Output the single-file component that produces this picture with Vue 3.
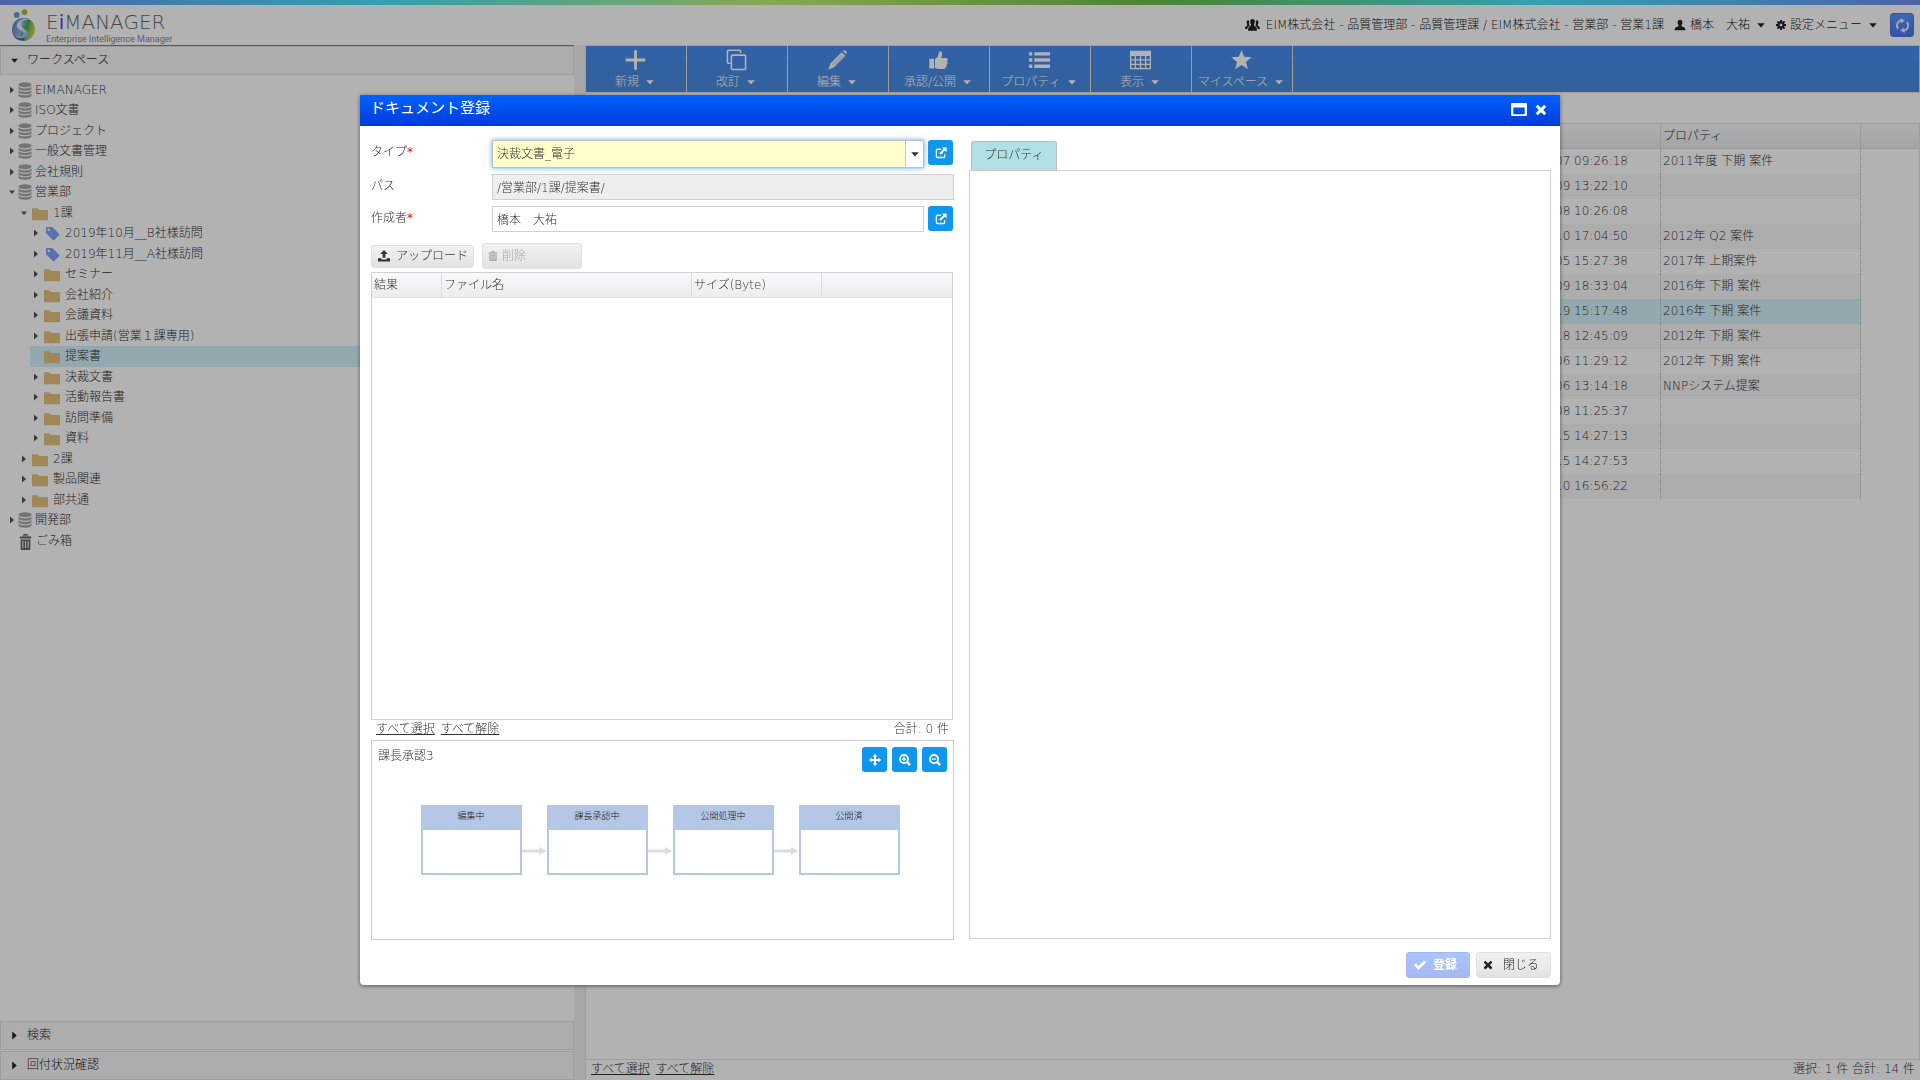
<script setup>
import { ref } from 'vue'

// Inner markup of each icon, all on a 16 x 16 grid
const icons = {
  caretDown: '<path d="M2 5h12l-6 7z"/>',
  caretRight: '<path d="M4 1v14l8-7z"/>',
  database: '<ellipse cx="8" cy="2.8" rx="7.4" ry="2.5"/><path d="M.6 4.6c1.5 2.500 13.300 2.500 14.800 0v2c0 3-14.800 3-14.800 0z"/><path d="M.6 8c1.5 2.500 13.300 2.500 14.800 0v2c0 3-14.800 3-14.800 0z"/><path d="M.6 11.400c1.5 2.500 13.300 2.500 14.800 0v2c0 3-14.800 3-14.800 0z"/>',
  folder: '<path d="M0 1.500h5.500l1.500 2h9v11.500h-16z"/>',
  tag: '<path fill-rule="evenodd" d="M1 2.200q0-1.200 1.200-1.200h4.600q.9 0 1.600.7l6.600 6.600q.8.800 0 1.600l-5 5q-.8.800-1.600 0l-6.700-6.600q-.7-.7-.7-1.600zM4 2.700a1.300 1.300 0 1 0 0 2.600a1.300 1.300 0 1 0 0-2.600z"/>',
  trash: '<path fill-rule="evenodd" d="M1 2.500h4.200v-1.500q0-1 1-1h3.600q1 0 1 1v1.500h4.200v2h-14zM6.600 1.400v1.100h2.800v-1.100zM2 5.500h12v9q0 1.500-1.500 1.500h-9q-1.500 0-1.500-1.500zM4.200 7v7h1.200v-7zM7.400 7v7h1.200v-7zM10.600 7v7h1.200v-7z"/>',
  plus: '<path d="M6.900.5h2.200v6.400h6.400v2.200h-6.400v6.400h-2.200v-6.400h-6.400v-2.200h6.400z"/>',
  copy: '<path fill="none" stroke="currentColor" stroke-width="1.200" d="M3.300 10.500h-1.200q-1 0-1-1v-7.900q0-1 1-1h8q1 0 1 1v1M5 4.300h9q.9 0 .9.900v9.200q0 .9-.9.900h-9q-.9 0-.9-.9v-9.200q0-.9.900-.9z"/>',
  pencil: '<path d="M11.200 2l2.800 2.800-8.400 8.500-4.600 2.200 1.800-5zM12 1.200q1.200-1.200 2.400 0t.4 2.700z"/><path d="M4 11.500l7.500-7.600M5 12.500l7.500-7.600" stroke="#4a8ce6" stroke-width=".4"/>',
  thumb: '<path d="M1 7h3.600v7.500h-3.600zM5.300 7.300c2-1 2.800-3 2.900-4.500 0-2.300 2.600-2 2.600.8 0 1.200-.5 2-.8 2.800h3.600c1.600 0 2 1.900.9 2.500.8.600.6 1.900-.3 2.300.4.800.1 1.800-.7 2 .2.900-.3 1.700-1.400 1.700h-3c-1.500 0-2.500-.8-3.800-.9z"/>',
  list: '<path d="M0 2h2.500v2.600h-2.500zM0 6.700h2.500v2.600h-2.500zM0 11.400h2.500v2.600h-2.500zM4 2h12v2.600h-12zM4 6.700h12v2.600h-12zM4 11.400h12v2.600h-12z"/>',
  table: '<path fill-rule="evenodd" d="M0 1h16v14h-16zM1 5v2.400h2.600v-2.400zM4.600 5v2.400h2.900v-2.400zM8.500 5v2.400h2.900v-2.400zM12.400 5v2.400h2.600v-2.400zM1 8.400v2.400h2.600v-2.400zM4.600 8.400v2.400h2.900v-2.400zM8.500 8.400v2.400h2.900v-2.400zM12.400 8.400v2.400h2.600v-2.400zM1 11.800v2.200h2.600v-2.200zM4.600 11.800v2.200h2.900v-2.200zM8.500 11.800v2.200h2.900v-2.200zM12.400 11.800v2.200h2.600v-2.200z"/>',
  star: '<path d="M8 .3l2.100 5.300 5.700.3-4.400 3.600 1.500 5.500-4.900-3.100-4.900 3.100 1.500-5.500-4.400-3.600 5.700-.3z"/>',
  users: '<path d="M8 1c1.700 0 2.600 1.300 2.500 3-.1 1.800-.8 2.500-1 3.300-.1 1 .6 1.400 1.700 1.900 1.200.5 1.500 1.500 1.500 4.300h-9.400c0-2.800.3-3.800 1.500-4.300 1.100-.5 1.800-.9 1.700-1.900-.2-.8-.9-1.500-1-3.300-.1-1.700.8-3 2.500-3z"/><path d="M3.600 2.500c-1.300 0-2 1-1.900 2.300.1 1.400.6 2 .7 2.600.1 1.300-2.400 1-2.400 4.400h2.400c.2-1.600.9-2.700 2.700-3.400-.9-1.400-1-3.700-.5-5.600zM12.400 2.500c1.300 0 2 1 1.900 2.300-.1 1.400-.6 2-.7 2.600-.1 1.300 2.400 1 2.400 4.400h-2.400c-.2-1.600-.9-2.700-2.700-3.400.9-1.400 1-3.700.5-5.600z"/>',
  user: '<path d="M8 1c2.300 0 3.300 1.700 3.200 3.800-.1 2-1.100 3-1.300 3.900-.1 1.500 1.500 1.500 3.200 2.300 1.700.7 2.100 1.600 2.100 4h-14.400c0-2.400.4-3.300 2.100-4 1.700-.8 3.300-.8 3.200-2.300-.2-.9-1.200-1.900-1.300-3.900-.1-2.100.9-3.800 3.200-3.800z"/>',
  cog: '<circle cx="8" cy="8" r="4" fill="none" stroke="currentColor" stroke-width="3.400"/><path stroke="currentColor" stroke-width="3" d="M8 0v3.500M8 12.500v3.500M0 8h3.500M12.500 8h3.500M2.300 2.300l2.500 2.500M11.200 11.200l2.500 2.500M2.300 13.700l2.500-2.500M11.200 4.800l2.500-2.500"/>',
  refresh: '<path fill="none" stroke="currentColor" stroke-width="2" d="M7 2.200a5.800 5.800 0 0 0-3.600 9.400M9 13.800a5.800 5.800 0 0 0 3.600-9.400"/><path d="M5.600 0l5 2.600-4.400 3.200zM10.400 16l-5-2.600 4.400-3.200z"/>',
  window: '<path fill-rule="evenodd" d="M1.200 0h13.600q1.200 0 1.200 1.200v13.600q0 1.200-1.200 1.200h-13.600q-1.200 0-1.200-1.200v-13.600q0-1.200 1.200-1.200zM2.300 5.500v8.200h11.400v-8.200z"/>',
  times: '<path d="M1 3.700l2.700-2.700 4.300 4 4.300-4 2.700 2.700-4 4.300 4 4.300-2.700 2.700-4.300-4-4.300 4-2.700-2.700 4-4.300z"/>',
  external: '<path fill="none" stroke="currentColor" stroke-width="1.800" d="M8 3h-4.600q-1.500 0-1.500 1.500v8q0 1.500 1.500 1.500h8q1.500 0 1.500-1.500v-3"/><path d="M9 .5h6.500v6.500l-2.200-2.200-5.500 5.500-2.100-2.100 5.500-5.500z"/>',
  upload: '<path d="M8 0l5 5.300h-3.200v5h-3.600v-5h-3.200zM0 11h4.500v1.500h7v-1.500h4.500v4.300h-16z"/>',
  move: '<path d="M8 0l3.200 3.400h-1.900v3.300h3.300v-1.900l3.400 3.200-3.400 3.200v-1.900h-3.300v3.300h1.900l-3.200 3.400-3.200-3.400h1.900v-3.300h-3.300v1.900l-3.400-3.200 3.400-3.200v1.900h3.300v-3.300h-1.900z"/>',
  zoomIn: '<circle cx="6.700" cy="6.700" r="5.400" fill="none" stroke="currentColor" stroke-width="2.400"/><path d="M9.700 12l2.300-2.300 4 4-2.300 2.300zM5.900 3.800h1.600v2.100h2.100v1.600h-2.100v2.100h-1.600v-2.100h-2.100v-1.600h2.100z"/>',
  zoomOut: '<circle cx="6.700" cy="6.700" r="5.400" fill="none" stroke="currentColor" stroke-width="2.400"/><path d="M9.700 12l2.300-2.300 4 4-2.300 2.300zM3.800 5.900h5.800v1.600h-5.800z"/>',
  check: '<path d="M0 8.300l2.600-2.600 3.500 3.500 7.200-7.200 2.700 2.600-9.900 9.900z"/>',
}

const tree = [
  { name: 'EIMANAGER', level: 0, icon: 'database' },
  { name: 'ISO文書', level: 0, icon: 'database' },
  { name: 'プロジェクト', level: 0, icon: 'database' },
  { name: '一般文書管理', level: 0, icon: 'database' },
  { name: '会社規則', level: 0, icon: 'database' },
  { name: '営業部', level: 0, icon: 'database', open: true },
  { name: '1課', level: 1, icon: 'folder', open: true },
  { name: '2019年10月__B社様訪問', level: 2, icon: 'tag' },
  { name: '2019年11月__A社様訪問', level: 2, icon: 'tag' },
  { name: 'セミナー', level: 2, icon: 'folder' },
  { name: '会社紹介', level: 2, icon: 'folder' },
  { name: '会議資料', level: 2, icon: 'folder' },
  { name: '出張申請(営業１課専用)', level: 2, icon: 'folder' },
  { name: '提案書', level: 2, icon: 'folder', leaf: true, selected: true },
  { name: '決裁文書', level: 2, icon: 'folder' },
  { name: '活動報告書', level: 2, icon: 'folder' },
  { name: '訪問準備', level: 2, icon: 'folder' },
  { name: '資料', level: 2, icon: 'folder' },
  { name: '2課', level: 1, icon: 'folder' },
  { name: '製品関連', level: 1, icon: 'folder' },
  { name: '部共通', level: 1, icon: 'folder' },
  { name: '開発部', level: 0, icon: 'database' },
  { name: 'ごみ箱', level: 0, icon: 'trash', leaf: true },
]

const tools = [
  { label: '新規', icon: 'plus' },
  { label: '改訂', icon: 'copy' },
  { label: '編集', icon: 'pencil' },
  { label: '承認/公開', icon: 'thumb' },
  { label: 'プロパティ', icon: 'list' },
  { label: '表示', icon: 'table' },
  { label: 'マイスペース', icon: 'star' },
]

const rows = [
  ['07 09:26:18', '2011年度 下期 案件'],
  ['09 13:22:10', ''],
  ['08 10:26:08', ''],
  ['10 17:04:50', '2012年 Q2 案件'],
  ['05 15:27:38', '2017年 上期案件'],
  ['09 18:33:04', '2016年 下期 案件'],
  ['19 15:17:48', '2016年 下期 案件'],
  ['18 12:45:09', '2012年 下期 案件'],
  ['06 11:29:12', '2012年 下期 案件'],
  ['06 13:14:18', 'NNPシステム提案'],
  ['08 11:25:37', ''],
  ['15 14:27:13', ''],
  ['15 14:27:53', ''],
  ['10 16:56:22', ''],
]
const selectedRow = 6

const steps = ['編集中', '課長承認中', '公開処理中', '公開済']

const docType = ref('決裁文書_電子')
const path = ref('/営業部/1課/提案書/')
const author = ref('橋本　大祐')
</script>

<template>
  <div class="app">
    <div class="rainbow"></div>
    <header class="top">
      <a class="brand" href="#">
        <svg class="mark" viewBox="0 0 26 34">
          <defs>
            <linearGradient id="orb" x1="0" y1=".3" x2="1" y2=".6">
              <stop offset="0" stop-color="#4f86c8" />
              <stop offset=".4" stop-color="#8fb4dc" />
              <stop offset=".6" stop-color="#4fa05a" />
              <stop offset="1" stop-color="#cfe650" />
            </linearGradient>
            <linearGradient id="swirl" x1="0" y1="0" x2=".6" y2="1">
              <stop offset="0" stop-color="#8fc08a" />
              <stop offset=".4" stop-color="#f4faff" />
              <stop offset="1" stop-color="#8fa8dc" />
            </linearGradient>
          </defs>
          <circle cx="13" cy="21" r="12" fill="url(#orb)" />
          <path d="M20 11c-7-1-11 3-9 7 2 3 8 4 7 9 0 3-4 5-9 5-3-1-5-3-6-5 3 2 9 2 10-1 1-4-7-4-7-9 0-5 7-9 14-6z" fill="url(#swirl)" />
          <path d="M2 25c3 6 9 7 13 4-1 4-6 4-9 2-2-1-4-4-4-6z" fill="#3d5fa8" />
          <circle cx="6" cy="6" r="3" fill="#6a9cc8" />
          <circle cx="14" cy="3" r="3" fill="#9cc03c" />
        </svg>
        <span class="brand-text">
          <span class="brand-name">E<b>i</b>MANAGER</span>
          <span class="brand-sub"><i>E</i>nterprise <i>I</i>ntelligence <i>M</i>anager</span>
        </span>
      </a>
      <div class="account">
        <svg class="ic i15" viewBox="0 0 16 16" v-html="icons.users"></svg>
        <span class="org">EIM株式会社 - 品質管理部 - 品質管理課 / EIM株式会社 - 営業部 - 営業1課</span>
        <button class="link-btn user-btn">
          <svg class="ic i12" viewBox="0 0 16 16" v-html="icons.user"></svg>
          <span>橋本　大祐</span>
          <svg class="ic caret" viewBox="0 0 16 16" v-html="icons.caretDown"></svg>
        </button>
        <button class="link-btn set-btn">
          <svg class="ic i10" viewBox="0 0 16 16" v-html="icons.cog"></svg>
          <span>設定メニュー</span>
          <svg class="ic caret" viewBox="0 0 16 16" v-html="icons.caretDown"></svg>
        </button>
        <button class="refresh" aria-label="更新">
          <svg class="ic i15" viewBox="0 0 16 16" v-html="icons.refresh"></svg>
        </button>
      </div>
    </header>

    <div class="work">
      <aside class="side">
        <button class="fold first">
          <svg class="ic fold-arrow" viewBox="0 0 16 16" v-html="icons.caretDown"></svg>ワークスペース
        </button>
        <ul class="tree">
          <li
            v-for="node in tree"
            :key="node.name"
            :class="['level' + node.level, { selected: node.selected }]"
          >
            <div class="node">
              <svg
                class="ic twisty"
                viewBox="0 0 16 16"
                v-html="node.leaf ? '' : node.open ? icons.caretDown : icons.caretRight"
              ></svg>
              <svg
                :class="['ic', 'node-icon', node.icon]"
                viewBox="0 0 16 16"
                preserveAspectRatio="none"
                v-html="icons[node.icon]"
              ></svg>
              <span>{{ node.name }}</span>
            </div>
          </li>
        </ul>
        <button class="fold">
          <svg class="ic fold-arrow" viewBox="0 0 16 16" v-html="icons.caretRight"></svg>検索
        </button>
        <button class="fold">
          <svg class="ic fold-arrow" viewBox="0 0 16 16" v-html="icons.caretRight"></svg>回付状況確認
        </button>
      </aside>

      <main class="main">
        <nav class="tools">
          <button v-for="tool in tools" :key="tool.label" class="tool">
            <svg class="ic tool-icon" viewBox="0 0 16 16" v-html="icons[tool.icon]"></svg>
            <span class="tool-label">
              {{ tool.label }}
              <svg class="ic caret" viewBox="0 0 16 16" v-html="icons.caretDown"></svg>
            </span>
          </button>
        </nav>
        <div class="list">
          <table class="docs">
            <colgroup>
              <col />
              <col class="c-prop" />
              <col class="c-rest" />
            </colgroup>
            <thead>
              <tr><th></th><th>プロパティ</th><th></th></tr>
            </thead>
            <tbody>
              <tr v-for="(row, i) in rows" :key="i" :class="{ selected: i === selectedRow }">
                <td class="date">{{ row[0] }}</td>
                <td>{{ row[1] }}</td>
                <td class="rest"></td>
              </tr>
            </tbody>
          </table>
        </div>
        <div class="list-foot">
          <span class="links"><a href="#">すべて選択</a><a href="#">すべて解除</a></span>
          <span>選択: 1 件 合計: 14 件</span>
        </div>
      </main>
    </div>

    <div class="mask">
      <section class="dialog" role="dialog" aria-labelledby="dialog-title">
        <div class="dialog-bar">
          <h1 id="dialog-title">ドキュメント登録</h1>
          <button class="bar-btn" aria-label="最大化">
            <svg class="ic max" viewBox="0 0 16 16" preserveAspectRatio="none" v-html="icons.window"></svg>
          </button>
          <button class="bar-btn" aria-label="閉じる">
            <svg class="ic i12" viewBox="0 0 16 16" v-html="icons.times"></svg>
          </button>
        </div>

        <div class="dialog-body">
          <div class="left">
            <form class="fields" @submit.prevent>
              <div class="field">
                <label for="type">タイプ<em>*</em></label>
                <span class="combo">
                  <select id="type" v-model="docType">
                    <option>決裁文書_電子</option>
                  </select>
                  <svg class="ic caret combo-arrow" viewBox="0 0 16 16" v-html="icons.caretDown"></svg>
                </span>
                <button type="button" class="square" aria-label="タイプ選択">
                  <svg class="ic i12" viewBox="0 0 16 16" v-html="icons.external"></svg>
                </button>
              </div>
              <div class="field">
                <label for="path">パス</label>
                <input id="path" v-model="path" readonly />
              </div>
              <div class="field">
                <label for="author">作成者<em>*</em></label>
                <input id="author" v-model="author" />
                <button type="button" class="square" aria-label="作成者選択">
                  <svg class="ic i12" viewBox="0 0 16 16" v-html="icons.external"></svg>
                </button>
              </div>
            </form>

            <div class="file-tools">
              <button class="gray upload">
                <svg class="ic i12" viewBox="0 0 16 16" v-html="icons.upload"></svg>アップロード
              </button>
              <button class="gray remove" disabled>
                <svg class="ic i10" viewBox="0 0 16 16" v-html="icons.trash"></svg>削除
              </button>
            </div>

            <div class="files">
              <table>
                <colgroup>
                  <col class="c-result" />
                  <col class="c-name" />
                  <col class="c-size" />
                  <col />
                </colgroup>
                <thead>
                  <tr><th>結果</th><th>ファイル名</th><th>サイズ(Byte)</th><th></th></tr>
                </thead>
              </table>
            </div>
            <div class="files-foot">
              <span class="links"><a href="#">すべて選択</a><a href="#">すべて解除</a></span>
              <span>合計: 0 件</span>
            </div>

            <div class="flow">
              <div class="flow-head">
                <span>課長承認3</span>
                <div class="flow-btns">
                  <button class="square" aria-label="移動">
                    <svg class="ic i12" viewBox="0 0 16 16" v-html="icons.move"></svg>
                  </button>
                  <button class="square" aria-label="拡大">
                    <svg class="ic i12" viewBox="0 0 16 16" v-html="icons.zoomIn"></svg>
                  </button>
                  <button class="square" aria-label="縮小">
                    <svg class="ic i12" viewBox="0 0 16 16" v-html="icons.zoomOut"></svg>
                  </button>
                </div>
              </div>
              <div class="steps">
                <template v-for="(step, i) in steps" :key="step">
                  <svg v-if="i" class="arrow" viewBox="0 0 25 10">
                    <path d="M0 3.500h17v-2.500l7.500 4-7.500 4v-2.500h-17z" />
                  </svg>
                  <div class="step"><div class="step-name">{{ step }}</div></div>
                </template>
              </div>
            </div>
          </div>

          <div class="right">
            <button class="tab">プロパティ</button>
            <div class="tab-panel"></div>
          </div>
        </div>

        <div class="dialog-foot">
          <button class="submit" disabled>
            <svg class="ic i12" viewBox="0 0 16 16" v-html="icons.check"></svg>登録
          </button>
          <button class="gray close">
            <svg class="ic i10" viewBox="0 0 16 16" v-html="icons.times"></svg>閉じる
          </button>
        </div>
      </section>
    </div>
  </div>
</template>

<style>
body {
  margin: 0;
  background: #fff;
}
</style>

<style scoped>
.app,
.app button,
.app input,
.app select {
  font-family: "DejaVu Sans", "Noto Sans CJK JP", sans-serif;
  font-size: 12px;
  line-height: 18px;
  font-weight: 300;
}
.app * {
  box-sizing: border-box;
}
.app {
  display: flex;
  flex-direction: column;
  min-height: 100vh;
  color: #333;
}
button {
  margin: 0;
  padding: 0;
  border: 0;
  background: none;
  color: inherit;
}
a {
  color: inherit;
}
.ic {
  display: block;
  flex: none;
  fill: currentColor;
}
.i10 { width: 10px; height: 10px; }
.i12 { width: 12px; height: 12px; }
.i15 { width: 15px; height: 15px; }
.caret { width: 10px; height: 10px; }
.links {
  display: flex;
  gap: 6px;
}

/* header */
.rainbow {
  height: 5px;
  background: linear-gradient(90deg, #6f8ff2, #48e6fc 20%, #c5f07a 40%, #6dbe48 60%, #48e6fc 80%, #6f8ff2);
}
.top {
  display: flex;
  justify-content: space-between;
  height: 40px;
  padding: 0 6px 0 11px;
}
.brand {
  display: flex;
  gap: 10px;
  text-decoration: none;
  color: #666;
}
.mark {
  width: 25px;
  height: 33px;
  margin-top: 4px;
}
.brand-text {
  display: flex;
  flex-direction: column;
  padding-top: 6px;
}
.brand-name {
  font-size: 20px;
  line-height: 23px;
  font-weight: 200;
}
.brand-name b {
  font-weight: 400;
  color: #5a40e0;
}
.brand-sub {
  font: 9px/10px Roboto, sans-serif;
  color: #888;
}
.brand-sub i {
  font-style: normal;
  color: #8a7ee8;
}
.account {
  display: flex;
  align-items: center;
  color: #222;
}
.org {
  margin: 0 6px 0 6px;
}
.link-btn {
  display: flex;
  align-items: center;
  gap: 4px;
}
.user-btn {
  margin-left: 4px;
}
.set-btn {
  margin-left: 10px;
}
.link-btn .caret {
  margin-left: 2px;
}
.refresh {
  display: flex;
  align-items: center;
  justify-content: center;
  width: 24px;
  height: 24px;
  margin-left: 12px;
  border: 1px solid #4a77e6;
  border-radius: 3px;
  background: linear-gradient(#5693ff, #4a77f0);
  color: #e8eeff;
}

/* side */
.work {
  display: flex;
  flex: 1;
  background: #f0f0f0;
}
.side {
  display: flex;
  flex-direction: column;
  gap: 1px;
  flex: 0 0 574px;
  border-top: 1px solid #808080;
  background: #fff;
}
.fold {
  display: flex;
  align-items: center;
  gap: 8px;
  height: 29px;
  padding: 0 0 1px 9px;
  border: 1px solid #e2e2e2;
  background: #f8f8f8;
  color: #222;
}
.fold-arrow {
  width: 9px;
  height: 9px;
}
.tree {
  flex: 1;
  margin: 0;
  padding: 4px 0 0;
  list-style: none;
}
.tree li {
  height: 20px;
}
.tree li:nth-child(even) {
  height: 21px;
}
.tree .selected {
  margin-left: 30px;
  background: #d5f3fb;
}
.tree .selected .node {
  margin-left: -30px;
}
.node {
  display: flex;
  align-items: center;
  height: 19px;
  padding-left: 8px;
}
.level1 .node { padding-left: 20px; }
.level2 .node { padding-left: 32px; }
.twisty {
  width: 8px;
  height: 8px;
  color: #555;
}
.node-icon {
  width: 14px;
  height: 16px;
  margin: 1px 3px 0 2px;
  color: #a6a6a6;
}
.node-icon.folder {
  width: 16px;
  height: 14px;
  margin: 2px 5px 0 4px;
  color: #e4c27c;
}
.node-icon.tag {
  width: 15px;
  height: 15px;
  margin: 2px 5px 0 5px;
  color: #81a3fe;
}
.node-icon.trash {
  width: 13px;
  height: 16px;
  margin: 2px 4px 0 3px;
  color: #666;
}

/* main */
.main {
  display: flex;
  flex-direction: column;
  flex: 1;
  margin-left: 11px;
  border: solid #e2e2e2;
  border-width: 1px 0 0 1px;
  background: #fff;
}
.tools {
  display: flex;
  height: 47px;
  border-right: 1px solid #e2e2e2;
  border-bottom: 1px solid #e2e2e2;
  background: linear-gradient(#478bf0, #4a8cdf);
}
.tool {
  display: flex;
  flex-direction: column;
  align-items: center;
  gap: 1px;
  width: 101px;
  padding: 3px 2px 0 0;
  border-right: 1px solid #e2e2e2;
  color: #fff;
}
.tool-icon {
  width: 21px;
  height: 22px;
}
.tool-label {
  display: flex;
  align-items: center;
  gap: 6px;
  line-height: 20px;
}
.list {
  flex: 1;
  margin-top: 30px;
  border: solid #e2e2e2;
  border-width: 1px 1px 1px 0;
}
table {
  width: 100%;
  border-collapse: separate;
  border-spacing: 0;
  table-layout: fixed;
}
th {
  height: 25px;
  padding: 0 2px;
  border-right: 1px solid #dcdcdc;
  border-bottom: 1px solid #dcdcdc;
  background: linear-gradient(#f8f9fb, #eaecf1);
  font-weight: 300;
  text-align: left;
}
th:last-child {
  border-right: 0;
}
.c-prop { width: 200px; }
.c-rest { width: 58px; }
td {
  height: 25px;
  padding: 0 2px 2px;
  border-right: 1px dotted #bbb;
}
tbody tr:nth-child(even) td {
  background: #f8f8f8;
}
tbody .selected td {
  background: #d5f3fb;
}
tbody tr td.rest {
  border: 0;
  background: #fff;
}
.date {
  padding-right: 32px;
  text-align: right;
}
.list-foot {
  display: flex;
  justify-content: space-between;
  height: 20px;
  padding: 0 5px;
}

/* dialog */
.mask {
  position: fixed;
  inset: 0;
  display: flex;
  align-items: center;
  justify-content: center;
  background: rgba(0, 0, 0, 0.3);
}
.dialog {
  width: 1200px;
  max-width: 100%;
  border-radius: 0 0 4px 4px;
  background: #fff;
  box-shadow: 0 1px 4px rgba(0, 0, 0, 0.5);
}
.dialog-bar {
  display: flex;
  align-items: center;
  gap: 8px;
  height: 31px;
  padding: 0 13px 2px 10px;
  background: linear-gradient(#0062ff, #003bd8);
  color: #fff;
}
.dialog-bar h1 {
  flex: 1;
  margin: 0;
  padding-bottom: 3px;
  font-size: 15px;
  line-height: 20px;
  font-weight: 400;
}
.max {
  width: 16px;
  height: 13px;
}
.dialog-body {
  display: flex;
  gap: 15px;
  padding: 14px 9px 0 11px;
}
.left {
  flex: 0 0 583px;
}
.right {
  display: flex;
  flex: 1;
  flex-direction: column;
  align-items: flex-start;
  padding-top: 1px;
}
.fields {
  display: flex;
  flex-direction: column;
  gap: 6px;
}
.field {
  display: flex;
  align-items: flex-start;
}
.field label {
  width: 121px;
  padding-top: 3px;
}
.field em {
  font-style: normal;
  font-weight: 400;
  color: #f00;
}
.field input {
  flex: 1;
  min-width: 0;
  height: 26px;
  padding: 0 4px 2px;
  border: 1px solid #d0d0d0;
  border-radius: 0;
  outline: 0;
  color: #333;
}
.field input[readonly] {
  background: #eee;
}
.combo {
  position: relative;
  flex: 1;
}
.combo select {
  display: block;
  width: 100%;
  height: 28px;
  padding: 0 4px;
  border: 1px solid #c0c0c0;
  border-radius: 0;
  outline: 0;
  appearance: none;
  background: linear-gradient(90deg, #c8c8c8 1px, #fff 1px) right / 18px 100% no-repeat #ffffcc;
  box-shadow: 0 0 5px #5aaae8;
  color: #333;
}
.combo-arrow {
  position: absolute;
  top: 9px;
  right: 4px;
  pointer-events: none;
}
.square {
  display: flex;
  align-items: center;
  justify-content: center;
  width: 25px;
  height: 25px;
  border-radius: 3px;
  background: #0f97ee;
  color: #fff;
}
.field .square {
  margin: 0 1px 0 4px;
}
.gray {
  display: flex;
  align-items: center;
  height: 26px;
  border: 1px solid #e0e0e0;
  border-radius: 3px;
  background: linear-gradient(#f1f1f1, #e3e3e3);
}
.gray:disabled {
  color: #a8a8a8;
}
.file-tools {
  display: flex;
  align-items: center;
  gap: 8px;
  padding: 11px 0 3px;
}
.upload {
  gap: 6px;
  width: 103px;
  height: 23px;
  padding-left: 6px;
}
.remove {
  gap: 4px;
  width: 100px;
  padding-left: 5px;
}
.files {
  height: 448px;
  margin-right: 1px;
  border: 1px solid #d0d0d0;
}
.c-result { width: 70px; }
.c-name { width: 250px; }
.c-size { width: 130px; }
.files-foot {
  display: flex;
  justify-content: space-between;
  height: 20px;
  padding: 0 5px;
}
.flow {
  height: 200px;
  border: 1px solid #d0d0d0;
}
.flow-head {
  display: flex;
  justify-content: space-between;
  padding: 6px 6px 0 6px;
}
.flow-btns {
  display: flex;
  gap: 5px;
}
.steps {
  display: flex;
  justify-content: center;
  padding-top: 33px;
  margin-right: 5px;
}
.step {
  width: 101px;
  height: 70px;
  border: 2px solid #b4c7e7;
}
.step-name {
  height: 23px;
  background: #b4c7e7;
  color: #222;
  font-size: 9px;
  line-height: 19px;
  text-align: center;
}
.arrow {
  width: 25px;
  height: 10px;
  margin-top: 41px;
  fill: #ddd;
}
.tab {
  width: 86px;
  height: 29px;
  margin-left: 2px;
  padding-bottom: 2px;
  border: 1px solid #bbb;
  border-bottom: 0;
  border-radius: 3px 3px 0 0;
  background: #b0dfe5;
}
.tab-panel {
  flex: 1;
  align-self: stretch;
  margin-bottom: 1px;
  border: 1px solid #d0d0d0;
}
.dialog-foot {
  display: flex;
  justify-content: flex-end;
  gap: 6px;
  padding: 12px 9px 7px;
}
.app .submit {
  display: flex;
  align-items: center;
  gap: 7px;
  width: 64px;
  height: 26px;
  padding-left: 7px;
  border: 1px solid #a5b8ee;
  border-radius: 3px;
  background: linear-gradient(#a8c6ff, #a6b8f2);
  color: #fff;
  font-weight: 700;
}
.close {
  gap: 10px;
  width: 75px;
  padding-left: 6px;
  color: #222;
}
</style>
